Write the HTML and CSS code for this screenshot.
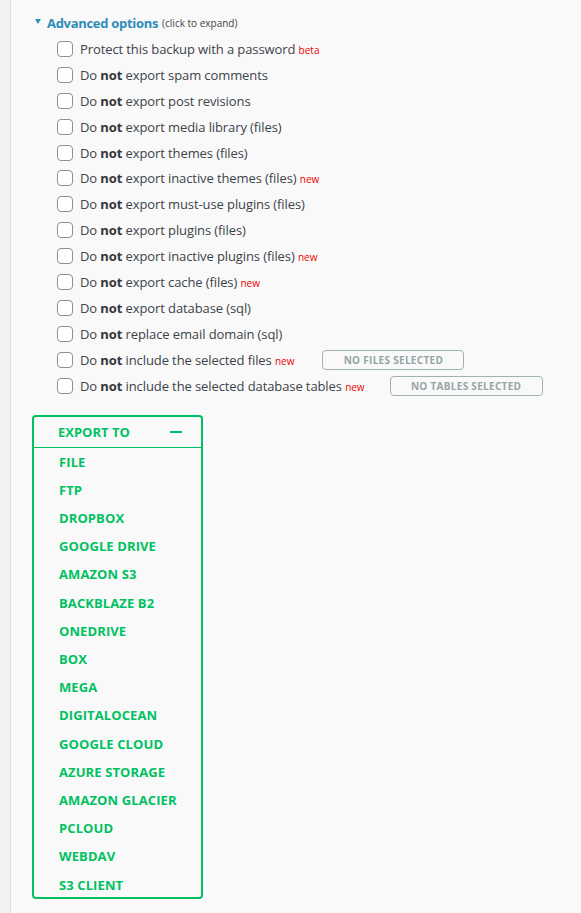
FILE: index.html
```html
<!DOCTYPE html>
<html lang="en">
<head>
<meta charset="utf-8">
<title>Export options</title>
<link rel="stylesheet" href="styles.css">
</head>
<body>
<div class="page">
  <aside class="strip"></aside>
  <main class="main">
    <div class="adv-header">
      <span class="caret"></span>
      <span class="adv-title">Advanced options</span>
      <small class="adv-hint">(click to expand)</small>
    </div>
    <ul class="options">
      <li><span class="cb"></span><span class="lbl">Protect this backup with a password <span class="tag">beta</span></span></li>
      <li><span class="cb"></span><span class="lbl">Do <b>not</b> export spam comments</span></li>
      <li><span class="cb"></span><span class="lbl">Do <b>not</b> export post revisions</span></li>
      <li><span class="cb"></span><span class="lbl">Do <b>not</b> export media library (files)</span></li>
      <li><span class="cb"></span><span class="lbl">Do <b>not</b> export themes (files)</span></li>
      <li><span class="cb"></span><span class="lbl">Do <b>not</b> export inactive themes (files) <span class="tag">new</span></span></li>
      <li><span class="cb"></span><span class="lbl">Do <b>not</b> export must-use plugins (files)</span></li>
      <li><span class="cb"></span><span class="lbl">Do <b>not</b> export plugins (files)</span></li>
      <li><span class="cb"></span><span class="lbl">Do <b>not</b> export inactive plugins (files) <span class="tag">new</span></span></li>
      <li><span class="cb"></span><span class="lbl">Do <b>not</b> export cache (files) <span class="tag">new</span></span></li>
      <li><span class="cb"></span><span class="lbl">Do <b>not</b> export database (sql)</span></li>
      <li><span class="cb"></span><span class="lbl">Do <b>not</b> replace email domain (sql)</span></li>
      <li><span class="cb"></span><span class="lbl">Do <b>not</b> include the selected files <span class="tag">new</span></span><span class="sel-btn sel-files">No files selected</span></li>
      <li><span class="cb"></span><span class="lbl">Do <b>not</b> include the selected database tables <span class="tag">new</span></span><span class="sel-btn sel-tables">No tables selected</span></li>
    </ul>
    <div class="export">
      <div class="export-head"><span>Export to</span><span class="minus"></span></div>
      <ul class="export-list">
        <li>File</li>
        <li>FTP</li>
        <li>Dropbox</li>
        <li>Google Drive</li>
        <li>Amazon S3</li>
        <li>Backblaze B2</li>
        <li>OneDrive</li>
        <li>Box</li>
        <li>Mega</li>
        <li>DigitalOcean</li>
        <li>Google Cloud</li>
        <li>Azure Storage</li>
        <li>Amazon Glacier</li>
        <li>pCloud</li>
        <li>WebDAV</li>
        <li>S3 Client</li>
      </ul>
    </div>
  </main>
</div>
</body>
</html>
```
FILE: styles.css
```css
html, body {
  margin: 0;
  padding: 0;
  height: 100%;
}
body {
  font-family: "Open Sans", "Noto Sans", sans-serif;
  color: #3c434a;
  background: #f9f9f9;
}
.page {
  display: flex;
  min-height: 913px;
}
.strip {
  width: 10px;
  flex: none;
  background: #f1f1f1;
  border-right: 1px solid #dcdcde;
}
.main {
  flex: 1;
  background: #f9f9f9;
  padding: 12px 0 0 21px;
}
.adv-header {
  display: flex;
  align-items: center;
  height: 20px;
  padding-left: 3px;
}
.caret {
  width: 0;
  height: 0;
  border-left: 3px solid transparent;
  border-right: 3px solid transparent;
  border-top: 5px solid #2e8cb8;
  margin-right: 6px;
  margin-top: -2px;
}
.adv-title {
  font-size: 13px;
  font-weight: 700;
  color: #2e8cb8;
  letter-spacing: -0.3px;
  position: relative;
  top: 1px;
}
.adv-hint {
  font-size: 10px;
  color: #444;
  margin-left: 4px;
  position: relative;
  top: 1px;
}
.options {
  list-style: none;
  margin: 4px 0 0 0;
  padding: 0 0 0 25px;
}
.options li {
  display: flex;
  align-items: center;
  height: 25.92px;
  font-size: 13px;
  letter-spacing: -0.1px;
  white-space: nowrap;
}
.cb {
  width: 14px;
  height: 14px;
  border: 1px solid #8c8f94;
  border-radius: 4px;
  background: #fff;
  margin-right: 7px;
  flex: none;
}
.options b {
  font-weight: 700;
  color: #32373c;
}
.tag {
  color: #e00;
  font-size: 10px;
  letter-spacing: 0;
}
.sel-btn {
  margin-left: 28px;
  height: 18px;
  border: 1px solid #9fb2b0;
  border-radius: 4px;
  color: #95a5a6;
  font-size: 10px;
  letter-spacing: 0.3px;
  font-weight: 700;
  text-transform: uppercase;
  display: flex;
  align-items: center;
  justify-content: center;
}
.sel-files { width: 140px; }
.sel-tables { width: 151px; margin-left: 25px; }
.export {
  margin-top: 16px;
  width: 167px;
  border: 2px solid #00c162;
  border-radius: 4px;
}
.export-head {
  display: flex;
  align-items: center;
  justify-content: space-between;
  height: 30px;
  padding: 0 19px 0 24px;
  border-bottom: 1px solid #00c162;
  color: #00c162;
  font-size: 13px;
  font-weight: 700;
  text-transform: uppercase;
}
.minus {
  width: 12px;
  height: 2px;
  background: #00c162;
}
.export-list {
  list-style: none;
  margin: 0;
  padding: 0;
}
.export-list li {
  height: 28.2px;
  line-height: 28.2px;
  padding-left: 25px;
  color: #00c162;
  font-size: 13px;
  letter-spacing: 0.1px;
  font-weight: 700;
  text-transform: uppercase;
}
.export-list li:last-child {
  height: 26px;
}
```
